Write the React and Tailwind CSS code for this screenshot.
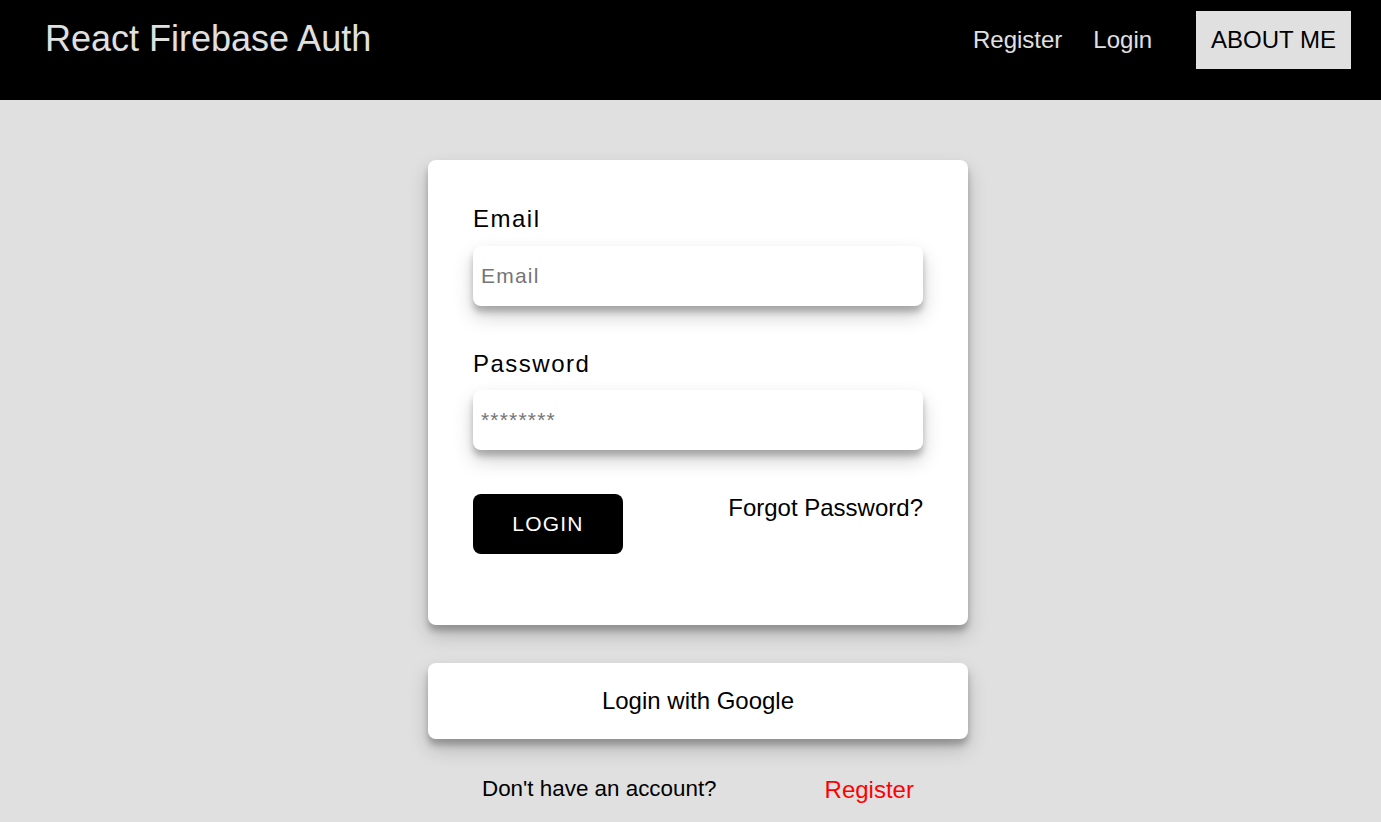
export default function App() {
  return (
    <div className="min-h-screen bg-[#e0e0e0] font-['Liberation_Sans',Arial,sans-serif] text-black">
      <header className="flex h-[100px] items-start justify-between bg-black pl-[45px] pr-[30px]">
        <h1 className="mt-[18px] text-[36px] leading-[1.15] text-[#e0e0e0]">React Firebase Auth</h1>
        <nav className="mt-[11px] flex items-center">
          <a className="mr-[31px] text-[24px] leading-[1.15] text-[#e0e0e0]">Register</a>
          <a className="mr-[44px] text-[24px] leading-[1.15] text-[#e0e0e0]">Login</a>
          <a className="bg-[#e0e0e0] px-[15px] py-[15px] text-[24px] leading-[1.15] text-black">ABOUT ME</a>
        </nav>
      </header>

      <main className="flex justify-center pl-[15px]">
        <div className="mt-[60px] flex w-[540px] flex-col">
          <form className="rounded-lg bg-white px-[45px] pt-[45px] pb-[71px] shadow-[0_10px_20px_rgba(0,0,0,0.19),0_6px_6px_rgba(0,0,0,0.23)]">
            <label className="mb-[13px] block text-[24px] leading-[1.15] tracking-[1.5px]">Email</label>
            <input
              type="email"
              placeholder="Email"
              className="mb-[44px] block h-[60px] w-full rounded-lg bg-white pr-[7px] pl-[8px] text-[21px] leading-[1.15] tracking-[1.2px] outline-none placeholder:text-[#757575] shadow-[0_10px_20px_rgba(0,0,0,0.19),0_6px_6px_rgba(0,0,0,0.23)]"
            />
            <label className="mb-[13px] block text-[24px] leading-[1.15] tracking-[1.5px]">Password</label>
            <input
              type="password"
              placeholder="********"
              className="mb-[44px] block h-[60px] w-full rounded-lg bg-white pr-[7px] pl-[8px] text-[21px] leading-[1.15] tracking-[1.2px] outline-none placeholder:text-[#757575] shadow-[0_10px_20px_rgba(0,0,0,0.19),0_6px_6px_rgba(0,0,0,0.23)]"
            />
            <div className="flex items-start justify-between">
              <button
                type="button"
                className="h-[60px] w-[150px] rounded-lg bg-black text-[21px] leading-[1.15] tracking-[1.2px] text-white"
              >
                LOGIN
              </button>
              <a className="text-[24px] leading-[1.15]">Forgot Password?</a>
            </div>
          </form>

          <button
            type="button"
            className="mt-[38px] rounded-lg bg-white py-[24px] text-center text-[24px] leading-[1.15] shadow-[0_10px_20px_rgba(0,0,0,0.19),0_6px_6px_rgba(0,0,0,0.23)]"
          >
            Login with Google
          </button>

          <div className="mt-[37px] flex items-start justify-around">
            <p className="text-[22.4px] leading-[1.15]">Don't have an account?</p>
            <a className="text-[24px] leading-[1.15] text-[#ff0000]">Register</a>
          </div>
        </div>
      </main>
    </div>
  );
}
